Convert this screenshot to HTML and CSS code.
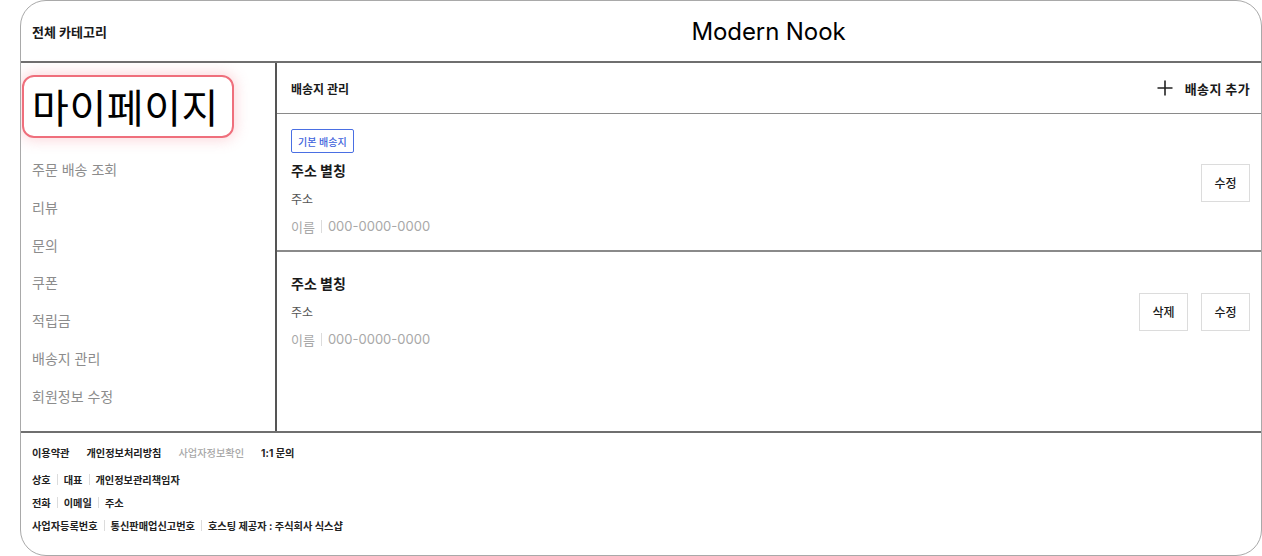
FILE: index.html
```html
<!DOCTYPE html>
<html lang="ko">
<head>
<meta charset="UTF-8">
<title>Modern Nook – 배송지 관리</title>
<meta name="viewport" content="width=device-width,initial-scale=1">
<link rel="stylesheet" href="styles.css">
</head>
<body>
<div class="frame">
  <header class="topbar">
    <div class="cat-label">전체 카테고리</div>
    <h1 class="brand">Modern Nook</h1>
  </header>

  <div class="layout">
    <aside class="side">
      <div class="side-title">마이페이지</div>
      <ul class="side-menu">
        <li>주문 배송 조회</li>
        <li>리뷰</li>
        <li>문의</li>
        <li>쿠폰</li>
        <li>적립금</li>
        <li>배송지 관리</li>
        <li>회원정보 수정</li>
      </ul>
    </aside>

    <main class="content">
      <div class="content-head">
        <span class="content-title">배송지 관리</span>
        <button class="add-btn">
          <svg width="16" height="16" viewBox="0 0 16 16"><path d="M8 0.5V15.5M0.5 8H15.5" stroke="#222" stroke-width="1.6" fill="none"/></svg>
          <span>배송지 추가</span>
        </button>
      </div>

      <div class="addr-card">
        <div class="addr-info">
          <span class="badge">기본 배송지</span>
          <div class="addr-alias">주소 별칭</div>
          <div class="addr-line">주소</div>
          <div class="addr-meta"><span>이름</span><i class="sep"></i><span>000-0000-0000</span></div>
        </div>
        <div class="addr-actions">
          <button class="small-btn">수정</button>
        </div>
      </div>

      <div class="addr-card addr-card-plain">
        <div class="addr-info">
          <div class="addr-alias">주소 별칭</div>
          <div class="addr-line">주소</div>
          <div class="addr-meta"><span>이름</span><i class="sep"></i><span>000-0000-0000</span></div>
        </div>
        <div class="addr-actions">
          <button class="small-btn">삭제</button>
          <button class="small-btn">수정</button>
        </div>
      </div>
    </main>
  </div>

  <footer class="foot">
    <div class="foot-links">
      <span>이용약관</span>
      <span>개인정보처리방침</span>
      <span class="dim">사업자정보확인</span>
      <span>1:1 문의</span>
    </div>
    <div class="foot-row"><span>상호</span><i class="sep"></i><span>대표</span><i class="sep"></i><span>개인정보관리책임자</span></div>
    <div class="foot-row"><span>전화</span><i class="sep"></i><span>이메일</span><i class="sep"></i><span>주소</span></div>
    <div class="foot-row"><span>사업자등록번호</span><i class="sep"></i><span>통신판매업신고번호</span><i class="sep"></i><span>호스팅 제공자 : 주식회사 식스샵</span></div>
  </footer>
</div>
</body>
</html>
```

FILE: styles.css
```css
:root {
  --line-strong:#6f6f6f;
  --line-mid:#8a8a8a;
  --line-soft:#dcdcdc;
  --text-main:#1a1a1a;
  --text-dim:#8c8c8c;
  --text-faint:#a8a8a8;
  --accent:#4a6fe3;
  --font-stack:Inter,"Noto Sans CJK KR",sans-serif;
}
*{box-sizing:border-box;}
body{margin:0;background:#fff;font-family:var(--font-stack);color:var(--text-main);}
ul{margin:0;padding:0;list-style:none;}
button{font-family:inherit;background:#fff;cursor:pointer;}

.frame{margin-left:20px;width:1242px;height:556px;border:1px solid #a9a9a9;border-radius:26px;overflow:hidden;display:flex;flex-direction:column;}

.topbar{display:grid;grid-template-columns:255px 1fr;align-items:center;height:62px;border-bottom:2px solid var(--line-strong);}
.cat-label{padding-left:11px;font-size:13px;font-weight:700;}
.brand{margin:0;text-align:center;font-size:24px;font-weight:400;letter-spacing:-.1px;color:#000;}

.layout{display:grid;grid-template-columns:256px 1fr;height:370px;border-bottom:2px solid var(--line-strong);}

.side{border-right:2px solid #555;padding-top:12px;}
.side-title{margin-left:1px;width:212px;height:63px;padding:0 0 2px 8px;display:flex;align-items:center;font-family:"Noto Sans CJK KR",sans-serif;font-size:40px;font-weight:400;letter-spacing:.6px;color:#000;border:2.5px solid #ef6f7c;border-radius:12px;box-shadow:0 0 14px 2px rgba(239,111,124,0.28);}
.side-menu{margin-top:13px;}
.side-menu li{padding-left:11px;height:37.8px;line-height:37.8px;font-size:14px;color:var(--text-dim);}

.content{display:flex;flex-direction:column;}
.content-head{display:flex;align-items:center;justify-content:space-between;height:51px;padding:0 11px 0 14px;border-bottom:1px solid var(--line-mid);}
.content-title{font-size:12px;font-weight:700;}
.add-btn{display:flex;align-items:center;gap:12px;border:0;padding:0;font-size:13px;font-weight:700;letter-spacing:.4px;color:var(--text-main);}

.addr-card{display:flex;align-items:center;justify-content:space-between;padding:15px 11px 14px 14px;border-bottom:2px solid var(--line-mid);}
.addr-card-plain{padding-top:22px;border-bottom:0;}
.addr-info{display:flex;flex-direction:column;align-items:flex-start;}
.badge{height:24px;padding:0 6px;display:flex;align-items:center;font-size:10px;font-weight:500;color:#3d62dc;border:1px solid var(--accent);border-radius:2px;margin-bottom:8px;}
.addr-alias{height:20px;line-height:20px;font-size:14px;font-weight:700;}
.addr-line{margin-top:9px;height:20px;line-height:20px;font-size:12px;color:#555;}
.addr-meta{margin-top:6px;height:20px;display:flex;align-items:center;font-size:13px;color:var(--text-faint);}
.addr-meta .sep{height:13px;margin:0 6px;}
.sep{display:inline-block;width:1px;height:11px;background:var(--line-soft);}

.addr-actions{display:flex;gap:13px;}
.small-btn{width:49px;height:38px;border:1px solid var(--line-soft);font-size:12px;font-weight:500;color:var(--text-main);padding:0;}

.foot{padding:9px 11px 0;font-size:10.2px;font-weight:700;color:#222;}
.foot-links{display:flex;gap:17px;height:20px;align-items:center;margin-bottom:7px;}
.foot-links .dim{color:var(--text-faint);font-weight:500;}
.foot-row{display:flex;align-items:center;height:20px;margin-bottom:3px;}
.foot-row .sep{margin:0 6px;}
```
